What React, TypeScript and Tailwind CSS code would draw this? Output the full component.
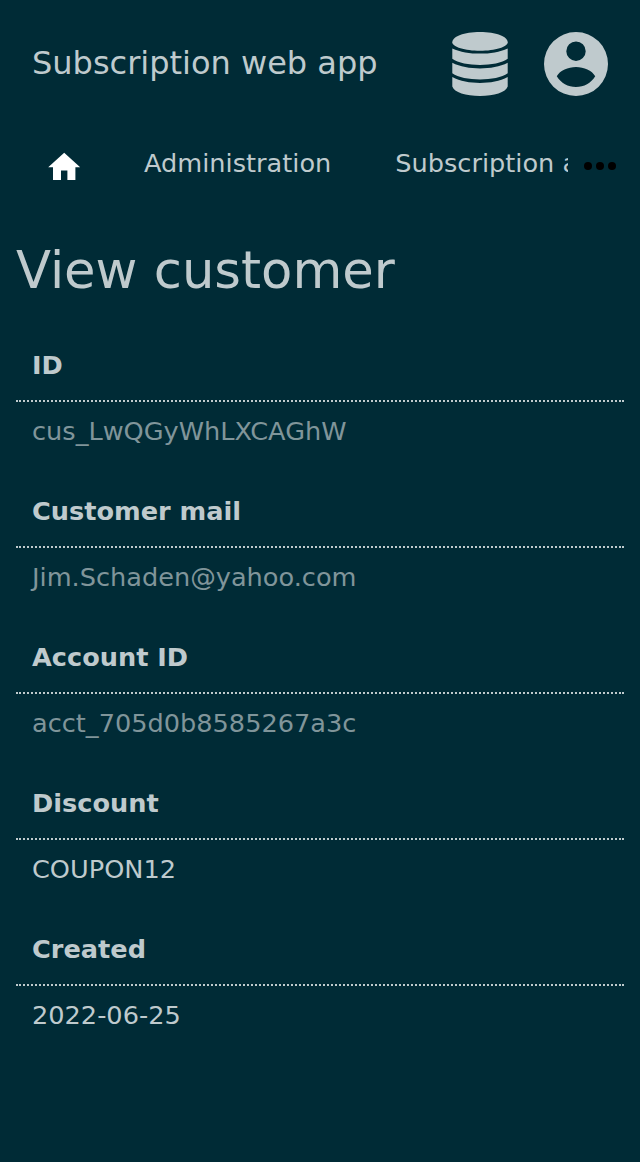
import { MdHome } from "react-icons/md";

const fields = [
  { label: "ID", value: "cus_LwQGyWhLXCAGhW", muted: true },
  { label: "Customer mail", value: "Jim.Schaden@yahoo.com", muted: true },
  { label: "Account ID", value: "acct_705d0b8585267a3c", muted: true },
  { label: "Discount", value: "COUPON12", muted: false },
  { label: "Created", value: "2022-06-25", muted: false },
];

function DatabaseIcon() {
  return (
    <svg className="mr-9 h-16 w-14 shrink-0" viewBox="0 0 56 64" fill="currentColor">
      <path d="M28 0C12 0 .3 4.6 .3 10.2 .3 15 13 18.7 28 18.7S55.7 15 55.7 10.2C55.7 4.6 44 0 28 0Z" />
      <path d="M.3 16.4C8 20 18 21.6 28 21.6S48 20 55.7 16.4V26.8C50 31 39 33 28 33S6 31 .3 26.8Z" />
      <path d="M.3 30.8C8 34.8 18 36.5 28 36.5S48 34.8 55.7 30.8V41.2C50 45.4 39 47.4 28 47.4S6 45.4 .3 41.2Z" />
      <path d="M.3 45C8 49.2 18 50.9 28 50.9S48 49.2 55.7 45V54.6C54 60.5 42 64 28 64S2 60.5 .3 54.6Z" />
    </svg>
  );
}

function AccountIcon() {
  return (
    <svg className="size-16 shrink-0" viewBox="0 0 64 64" fill="currentColor" fillRule="evenodd">
      <path d="M32 0a32 32 0 1 0 0 64 32 32 0 0 0 0-64Zm0 9.5a9.7 9.7 0 1 1 0 19.4 9.7 9.7 0 0 1 0-19.4ZM12.8 44.2C16 38.5 24 35 32 35s16 3.5 19.2 9.2C47 51 40 55 32 55s-15-4-19.2-10.8Z" />
    </svg>
  );
}

export default function App() {
  return (
    <div className="min-h-[1162px] overflow-hidden bg-[#002b36] font-['DejaVu_Sans',sans-serif] text-[#bfcacd]">
      <header className="flex h-32 items-center px-8">
        <div className="flex-1 pb-0.5 text-[32px] leading-none">Subscription web app</div>
        <DatabaseIcon />
        <AccountIcon />
      </header>
      <nav className="flex h-[72px] items-center">
        <div className="flex w-[568px] items-center overflow-hidden text-[25.6px] whitespace-nowrap">
          <MdHome className="mt-[6px] mr-[60.8px] ml-[44.8px] size-[38.4px] shrink-0 text-white" />
          <span className="mr-16 pb-0.5">Administration</span>
          <span className="pb-0.5">Subscription administration</span>
        </div>
        <svg className="mt-1 ml-4 h-2 w-8 text-black" viewBox="0 0 32 8" fill="currentColor">
          <circle cx="4" cy="4" r="4" />
          <circle cx="16" cy="4" r="4" />
          <circle cx="28" cy="4" r="4" />
        </svg>
      </nav>
      <main className="px-4 pt-[40px]">
        <h1 className="h-[89px] text-[51.2px] leading-[60px]">View customer</h1>
        <dl className="text-[25.6px] leading-[30px]">
          {fields.map((f) => (
            <div key={f.label} className="h-[146px]">
              <dt className="h-[73px] border-b-2 border-dotted px-4 pt-[21px] font-bold">{f.label}</dt>
              <dd className={f.muted ? "px-4 pt-[14px] text-[#80959a]" : "px-4 pt-[14px]"}>{f.value}</dd>
            </div>
          ))}
        </dl>
      </main>
    </div>
  );
}
